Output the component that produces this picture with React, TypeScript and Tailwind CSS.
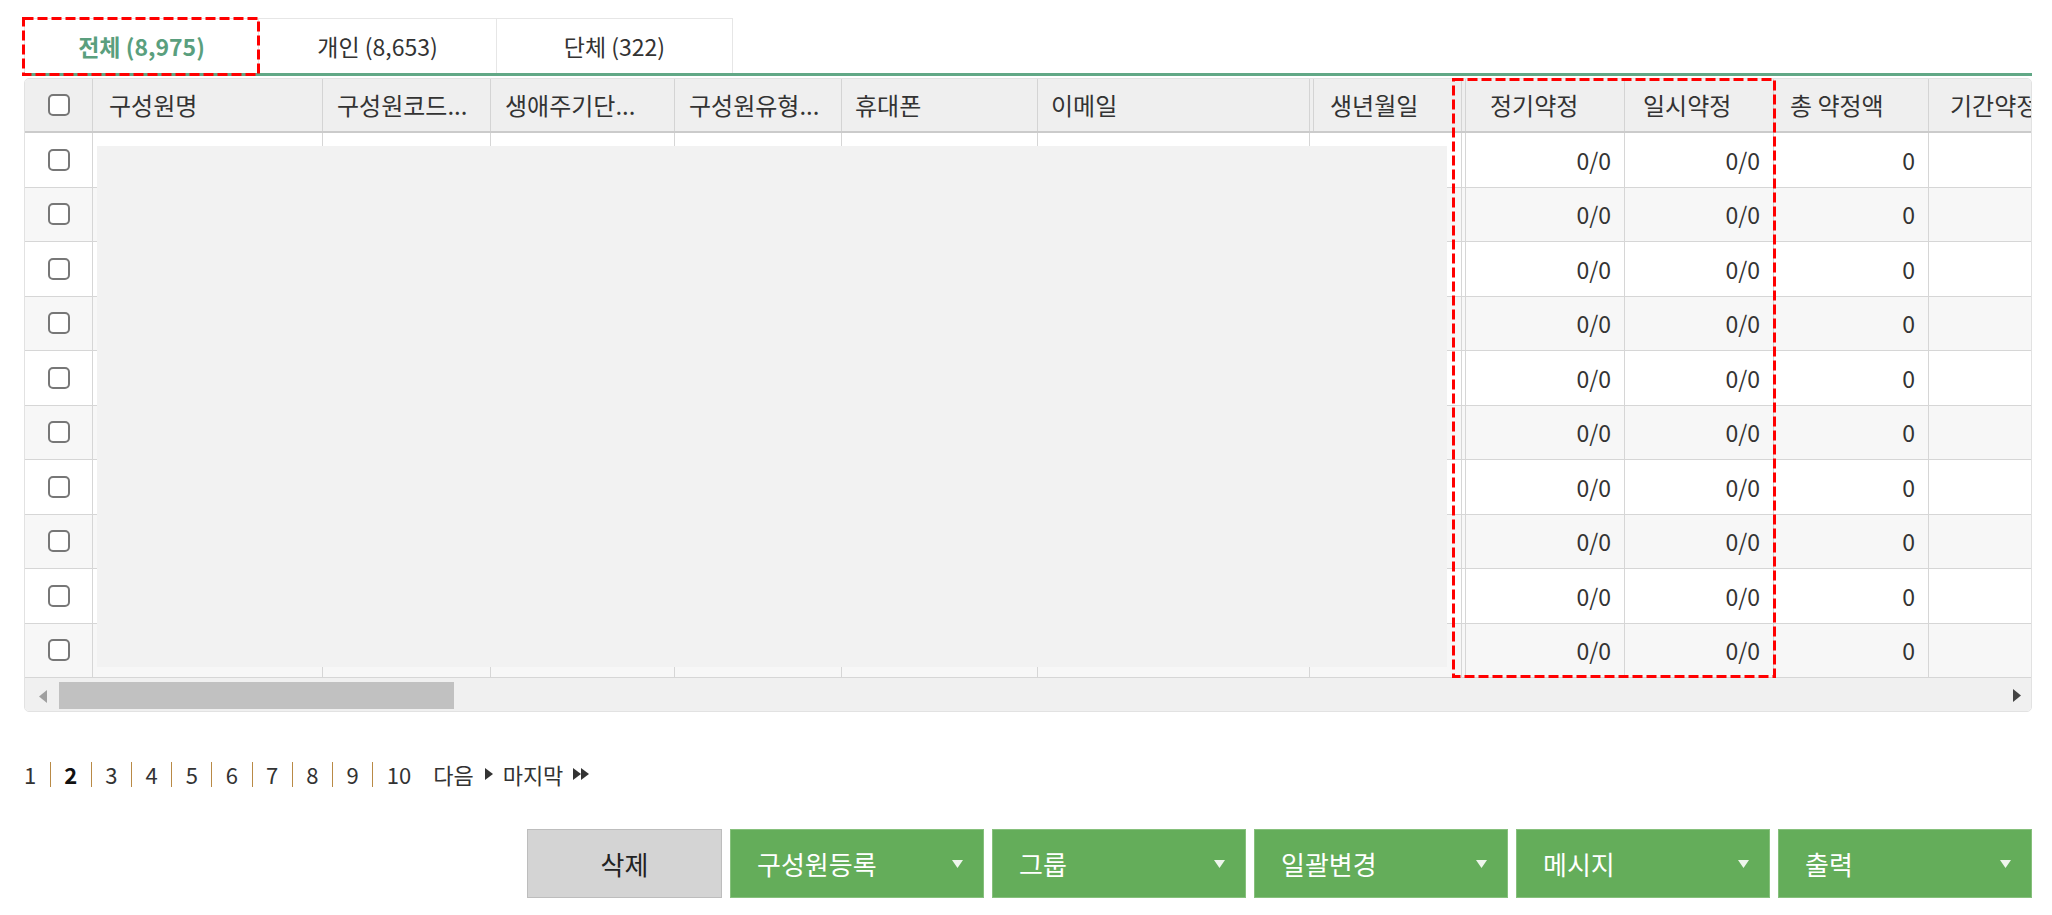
import { Fragment } from 'react';

interface Column {
  label: string;
  w: string;
  pad: string;
  dbl?: boolean;
  val?: string;
}

const columns: Column[] = [
  { label: '구성원명', w: 'w-[230px]', pad: 'pl-[16px]' },
  { label: '구성원코드...', w: 'w-[168px]', pad: 'pl-[14px]' },
  { label: '생애주기단...', w: 'w-[184px]', pad: 'pl-[14px]' },
  { label: '구성원유형...', w: 'w-[167px]', pad: 'pl-[14px]' },
  { label: '휴대폰', w: 'w-[196px]', pad: 'pl-[13px]' },
  { label: '이메일', w: 'w-[272px]', pad: 'pl-[13px]' },
  { label: '생년월일', w: 'w-[149px]', pad: 'pl-[16px]', dbl: true },
  { label: '정기약정', w: 'w-[160px]', pad: 'pl-[24px]', dbl: true, val: '0/0' },
  { label: '일시약정', w: 'w-[149px]', pad: 'pl-[18px]', val: '0/0' },
  { label: '총 약정액', w: 'w-[155px]', pad: 'pl-[16px]', val: '0' },
  { label: '기간약정', w: 'w-[160px]', pad: 'pl-[21px]', val: '' },
];

const tabs = [
  { label: '전체 (8,975)', w: 'w-[235px]', active: true },
  { label: '개인 (8,653)', w: 'w-[239px]', active: false },
  { label: '단체 (322)', w: 'w-[237px]', active: false },
];

const actions = ['구성원등록', '그룹', '일괄변경', '메시지', '출력'];

const Checkbox = () => (
  <span className="block w-[22px] h-[22px] rounded-[5px] border-2 border-[#777] bg-white" />
);

// red dashed annotation box drawn over the page
const DashedBox = ({ className }: { className: string }) => (
  <svg className={`absolute pointer-events-none ${className}`} preserveAspectRatio="none">
    <rect
      x="1.5"
      y="1.5"
      width="calc(100% - 3px)"
      height="calc(100% - 3px)"
      fill="none"
      stroke="#ff0000"
      strokeWidth="3"
      strokeDasharray="10 4"
    />
  </svg>
);

const Arrow = () => (
  <svg width="8" height="12" viewBox="0 0 8 12">
    <polygon points="0,0 8,6 0,12" fill="#333" />
  </svg>
);

export default function App() {
  const rows = Array.from({ length: 10 }, (_, i) => i);

  return (
    <div className="relative w-[2052px] h-[915px] bg-white text-[#333] font-['Noto_Sans_CJK_KR','Noto_Sans',sans-serif]">
      <div className="ml-[24px] w-[2008px] pt-[18px]">
        {/* Tabs */}
        <div className="flex h-[55px]">
          {tabs.map((t) => (
            <div
              key={t.label}
              className={`${t.w} flex items-center justify-center border-t border-x border-[#e6e6e6] -ml-px first:ml-0 text-[23px] ${
                t.active ? 'text-[#5a9f7e] font-bold' : 'text-[#333]'
              }`}
            >
              {t.label}
            </div>
          ))}
        </div>
        <div className="h-[3px] bg-[#61a886]" />

        {/* Grid */}
        <div className="relative mt-[2px] rounded-[5px] border border-[#e2e2e2] overflow-hidden">
          <div className="flex h-[54px] bg-[#efefef] border-b-2 border-[#cbcbcb]">
            <div className="w-[68px] shrink-0 flex items-center justify-center border-r border-[#d4d4d4]">
              <Checkbox />
            </div>
            {columns.map((c) => (
              <div
                key={c.label}
                className={`${c.w} shrink-0 flex items-center ${c.pad} text-[24px] whitespace-nowrap overflow-hidden border-r border-[#d4d4d4] ${
                  c.dbl ? 'border-l border-l-[#d4d4d4] ml-[3px]' : ''
                }`}
              >
                {c.label}
              </div>
            ))}
          </div>

          {rows.map((r) => (
            <div
              key={r}
              className={`flex h-[54.5px] border-b border-[#d6d6d6] ${r % 2 === 1 ? 'bg-[#f7f7f7]' : 'bg-white'}`}
            >
              <div className="w-[68px] shrink-0 flex items-center justify-center border-r border-[#d6d6d6]">
                <Checkbox />
              </div>
              {columns.map((c, ci) => (
                <div
                  key={c.label}
                  className={`${c.w} shrink-0 flex items-center justify-end pr-[13px] text-[23px] border-r border-[#d6d6d6] ${
                    ci === 7 ? 'border-l border-l-[#d6d6d6] ml-[3px]' : ''
                  } ${ci === 6 ? 'w-[152px]' : ''}`}
                >
                  {c.val}
                </div>
              ))}
            </div>
          ))}

          {/* masked personal data */}
          <div className="absolute left-[72px] top-[67px] w-[1350px] h-[521px] bg-[#f2f2f2]" />

          {/* horizontal scrollbar */}
          <div className="relative h-[33px] bg-[#f0f0f0]">
            <svg className="absolute left-[14px] top-[12px]" width="8" height="13" viewBox="0 0 8 13">
              <polygon points="8,0 0,6.5 8,13" fill="#a0a0a0" />
            </svg>
            <div className="absolute left-[34px] top-[4px] w-[395px] h-[27px] bg-[#c1c1c1]" />
            <svg className="absolute right-[10px] top-[11px]" width="8" height="13" viewBox="0 0 8 13">
              <polygon points="0,0 8,6.5 0,13" fill="#444" />
            </svg>
          </div>
        </div>

        {/* Pagination */}
        <div className="mt-[47px] h-[30px] flex items-center text-[22px] text-[#333]">
          <div className="flex items-center gap-[13.5px]">
            {Array.from({ length: 10 }, (_, i) => i + 1).map((n) => (
              <Fragment key={n}>
                {n > 1 && <span className="w-px h-[25px] bg-[#b98a46]" />}
                <span className={n === 2 ? 'font-bold text-[#111]' : ''}>{n}</span>
              </Fragment>
            ))}
          </div>
          <span className="ml-[22px]">다음</span>
          <span className="ml-[11px]">
            <Arrow />
          </span>
          <span className="ml-[10px]">마지막</span>
          <span className="ml-[10px] flex">
            <Arrow />
            <Arrow />
          </span>
        </div>

        {/* Action buttons */}
        <div className="mt-[40px] flex justify-end gap-[8px]">
          <button className="w-[195px] h-[69px] bg-[#d4d4d4] border border-[#bdbdbd] text-[26px] text-[#222]">
            삭제
          </button>
          {actions.map((a) => (
            <button
              key={a}
              className="w-[254px] h-[69px] bg-[#64ad5a] border border-[#86c07c] text-white text-[26px] flex items-center justify-between pl-[26px] pr-[20px]"
            >
              <span>{a}</span>
              <svg width="11" height="8" viewBox="0 0 11 8">
                <polygon points="0,0 11,0 5.5,8" fill="#eef6ec" />
              </svg>
            </button>
          ))}
        </div>
      </div>

      {/* annotations */}
      <DashedBox className="left-[22px] top-[17px] w-[238px] h-[59px]" />
      <DashedBox className="left-[1452px] top-[78px] w-[324px] h-[600px]" />
    </div>
  );
}
